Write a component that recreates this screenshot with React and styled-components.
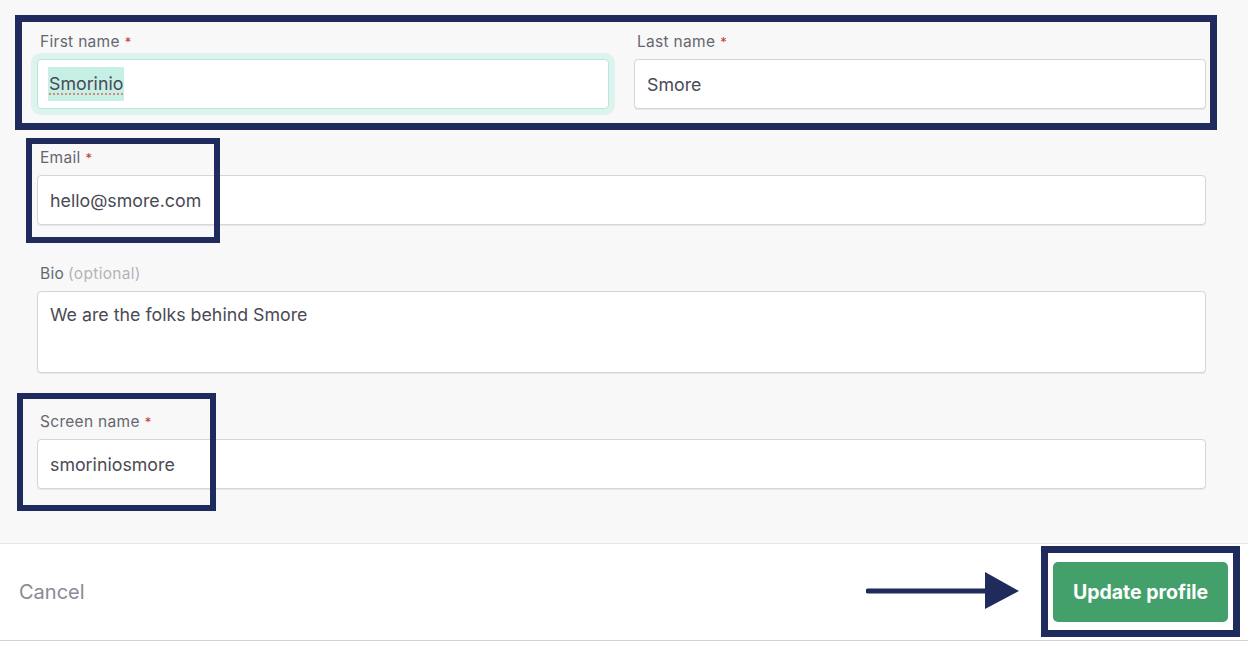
import React from "react";
import styled, { createGlobalStyle } from "styled-components";

const Global = createGlobalStyle`
  html, body { margin: 0; padding: 0; background: #ffffff; }
  body { font-family: Inter, "Noto Sans", Arial, sans-serif; -webkit-font-smoothing: antialiased; }
  * { box-sizing: border-box; }
`;

const Page = styled.div`
  position: relative;
  width: 1248px;
  height: 656px;
  overflow: hidden;
  background: #ffffff;
`;

const Form = styled.div`
  background: #f8f8f8;
  padding: 33px 42px 54px 37px;
  display: flex;
  flex-direction: column;
  gap: 40px;
`;

const Row = styled.div`
  display: grid;
  grid-template-columns: 1fr 1fr;
  column-gap: 25px;
`;

const Field = styled.div`
  display: flex;
  flex-direction: column;
`;

const Label = styled.label`
  height: 18px;
  line-height: 18px;
  margin: 0 0 8px 3px;
  font-size: 15.5px;
  color: #666670;
  letter-spacing: 0.3px;
`;

const Req = styled.span`
  color: #c43a3a;
  margin-left: 5px;
  font-size: 13px;
`;

const Opt = styled.span`
  color: #b3b3b8;
  margin-left: 4px;
`;

const Box = styled.div`
  height: ${(p) => (p.$tall ? "82px" : "50px")};
  background: #ffffff;
  border: 1px solid ${(p) => (p.$focus ? "#b9e6dc" : "#d5d5d8")};
  border-radius: 4px;
  box-shadow: ${(p) =>
    p.$focus ? "0 0 0 6px #dcf3ee" : "0 1px 1px rgba(0,0,0,0.07)"};
  display: flex;
  align-items: ${(p) => (p.$tall ? "flex-start" : "center")};
  padding: ${(p) => (p.$tall ? "12px 12px" : "0 12px")};
  font-size: 17.8px;
  color: #4a4a55;
`;

const Selected = styled.span`
  display: inline-block;
  background: #c6f0e6;
  line-height: 34px;
  padding: 0 1px;
  margin-left: -2px;
  text-decoration: underline dotted #e07a6a;
  text-underline-offset: 4px;
`;

const Footer = styled.div`
  height: 98px;
  background: #ffffff;
  border-top: 1px solid #e6e6e8;
  border-bottom: 1px solid #d2d2d6;
  display: flex;
  align-items: center;
  justify-content: space-between;
  padding: 0 20px 0 19px;
`;

const Cancel = styled.span`
  font-size: 20px;
  color: #8a8a94;
`;

const Primary = styled.button`
  width: 175px;
  height: 60px;
  border: none;
  border-radius: 5px;
  background: #43a06b;
  color: #ffffff;
  font-family: Inter, Arial, sans-serif;
  font-size: 19.5px;
  font-weight: 700;
  padding: 0;
`;

const Mark = styled.div`
  position: absolute;
  left: ${(p) => p.$x}px;
  top: ${(p) => p.$y}px;
  width: ${(p) => p.$w}px;
  height: ${(p) => p.$h}px;
  border: ${(p) => p.$t || 6}px solid #1f2b5c;
  pointer-events: none;
`;

const Arrow = styled.svg`
  position: absolute;
  left: 866px;
  top: 570px;
`;

export default function App() {
  return (
    <Page>
      <Global />
      <Form>
        <Row>
          <Field>
            <Label>
              First name<Req>*</Req>
            </Label>
            <Box $focus>
              <Selected>Smorinio</Selected>
            </Box>
          </Field>
          <Field>
            <Label>
              Last name<Req>*</Req>
            </Label>
            <Box>Smore</Box>
          </Field>
        </Row>
        <Field>
          <Label>
            Email<Req>*</Req>
          </Label>
          <Box>hello@smore.com</Box>
        </Field>
        <Field>
          <Label>
            Bio<Opt>(optional)</Opt>
          </Label>
          <Box $tall>We are the folks behind Smore</Box>
        </Field>
        <Field>
          <Label>
            Screen name<Req>*</Req>
          </Label>
          <Box>smoriniosmore</Box>
        </Field>
      </Form>
      <Footer>
        <Cancel>Cancel</Cancel>
        <Primary>Update profile</Primary>
      </Footer>

      <Mark $x={15} $y={15} $w={1202} $h={115} $t={7} />
      <Mark $x={26} $y={138} $w={194} $h={105} />
      <Mark $x={17} $y={393} $w={199} $h={118} />
      <Mark $x={1041} $y={546} $w={199} $h={91} $t={7} />
      <Arrow width="156" height="42" viewBox="0 0 156 42">
        <line x1="2" y1="21" x2="124" y2="21" stroke="#1f2b5c" strokeWidth="5" strokeLinecap="round" />
        <polygon points="119,2 153,21 119,39" fill="#1f2b5c" />
      </Arrow>
    </Page>
  );
}
